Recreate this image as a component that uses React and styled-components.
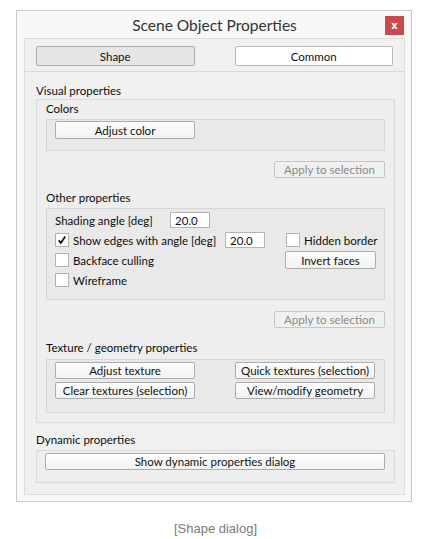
import React from "react";
import styled, { createGlobalStyle } from "styled-components";

const Global = createGlobalStyle`
  html, body { margin: 0; padding: 0; background: #ffffff; }
  body { font-family: Lato, "Noto Sans", sans-serif; font-size: 11.5px; color: #0d0d0d; }
  * { box-sizing: border-box; }
`;

const Page = styled.div`
  width: 431px;
  padding-top: 10px;
`;

const Window = styled.div`
  margin-left: 16px;
  width: 396px;
  background: #f8f8f8;
  border: 1px solid #c9c9c9;
  padding: 0 6px 6px 7px;
`;

const TitleBar = styled.div`
  height: 27px;
  position: relative;
  display: flex;
  align-items: center;
  justify-content: center;
`;

const Title = styled.div`
  font-family: Lato, sans-serif;
  font-size: 15.5px;
  color: #333;
  padding-top: 1px;
`;

const Close = styled.div`
  position: absolute;
  right: 1px;
  top: 5px;
  width: 19px;
  height: 19px;
  background: #c9494c;
  color: #fff;
  font-family: "DejaVu Sans", sans-serif;
  font-size: 10px;
  font-weight: bold;
  display: flex;
  align-items: center;
  justify-content: center;
  line-height: 1;
`;

const Panel = styled.div`
  background: #f0f0f0;
  border: 1px solid #dddddd;
  padding-bottom: 11px;
`;

const TabBar = styled.div`
  display: flex;
  gap: 40px;
  padding: 7px 11px 5px;
  border-bottom: 1px solid #d9d9d9;
`;

const Tab = styled.div`
  width: 160px;
  height: 20px;
  border: 1px solid ${(p) => (p.$active ? "#adadad" : "#b9b9b9")};
  border-radius: 2px;
  background: ${(p) => (p.$active ? "#e6e6e6" : "#ffffff")};
  display: flex;
  align-items: center;
  justify-content: center;
  color: #111;
`;

const Body = styled.div`
  padding: 0 9px 0 11px;
`;

const Label = styled.div`
  height: 16px;
  line-height: 16px;
  margin-top: ${(p) => p.$mt || 0}px;
  margin-bottom: ${(p) => (p.$mb === undefined ? 2 : p.$mb)}px;
  white-space: nowrap;
`;

const Group = styled.div`
  border: 1px solid #dadada;
  background: #eeeeee;
  padding: ${(p) => p.$pad || "1px 9px 9px"};
`;

const SubGroup = styled.div`
  border: 1px solid #d6d6d6;
  background: #e9e9e9;
  padding: ${(p) => p.$pad || "1px 8px"};
  height: ${(p) => (p.$h ? `${p.$h}px` : "auto")};
`;

const Button = styled.div`
  width: ${(p) => (p.$w ? `${p.$w}px` : "auto")};
  height: ${(p) => p.$h || 18}px;
  border: 1px solid ${(p) => (p.$disabled ? "#c6c6c6" : "#acacac")};
  border-radius: 2px;
  background: ${(p) =>
    p.$disabled ? "#f0f0f0" : "linear-gradient(#fdfdfd, #f2f2f2)"};
  color: ${(p) => (p.$disabled ? "#8a8a8a" : "#111")};
  display: flex;
  align-items: center;
  justify-content: center;
  white-space: nowrap;
  flex: ${(p) => (p.$w ? "none" : "1")};
`;

const RightRow = styled.div`
  display: flex;
  justify-content: flex-end;
  margin-top: ${(p) => p.$mt || 0}px;
`;

const Grid2 = styled.div`
  display: grid;
  grid-template-columns: 140px 140px;
  column-gap: 40px;
  row-gap: 3px;
`;

const PropRow = styled.div`
  display: flex;
  align-items: center;
  height: 20px;
`;

const Cell = styled.div`
  width: ${(p) => p.$w}px;
  display: flex;
  align-items: center;
  flex: none;
`;

const Text = styled.span`
  white-space: nowrap;
  width: ${(p) => (p.$w ? `${p.$w}px` : "auto")};
  flex: none;
`;

const Input = styled.div`
  width: 40px;
  height: 16px;
  border: 1px solid #b4b4b4;
  background: #fff;
  display: flex;
  align-items: center;
  padding-left: 4px;
`;

const Box = styled.div`
  width: 14px;
  height: 14px;
  border: 1px solid #b3b3b3;
  background: #fff;
  margin-right: 4px;
  flex: none;
  display: flex;
  align-items: center;
  justify-content: center;
`;

function Check({ checked, children, w }) {
  return (
    <>
      <Box>
        {checked && (
          <svg width="10" height="10" viewBox="0 0 10 10">
            <path d="M1.8 5.4 L3.8 8 L8.2 1.4" fill="none" stroke="#111" strokeWidth="1.8" />
          </svg>
        )}
      </Box>
      <Text $w={w}>{children}</Text>
    </>
  );
}

const Caption = styled.div`
  margin-top: 19px;
  text-align: center;
  font-family: "Liberation Sans", Arial, sans-serif;
  font-size: 13px;
  color: #7a7a7a;
`;

export default function App() {
  return (
    <Page>
      <Global />
      <Window>
        <TitleBar>
          <Title>Scene Object Properties</Title>
          <Close>x</Close>
        </TitleBar>
        <Panel>
          <TabBar>
            <Tab $active>Shape</Tab>
            <Tab>Common</Tab>
          </TabBar>
          <Body>
            <Label $mt={11} $mb={0}>Visual properties</Label>
            <Group>
              <Label>Colors</Label>
              <SubGroup $pad="1px 8px" $h={32}>
                <Button $w={140}>Adjust color</Button>
              </SubGroup>
              <RightRow $mt={10}>
                <Button $w={111} $h={17} $disabled>Apply to selection</Button>
              </RightRow>
              <Label $mt={12}>Other properties</Label>
              <SubGroup $pad="1px 8px 9px">
                <PropRow>
                  <Cell $w={230}>
                    <Text $w={115}>Shading angle [deg]</Text>
                    <Input>20.0</Input>
                  </Cell>
                </PropRow>
                <PropRow>
                  <Cell $w={231}>
                    <Check checked w={152}>Show edges with angle [deg]</Check>
                    <Input>20.0</Input>
                  </Cell>
                  <Cell $w={100}>
                    <Check>Hidden border</Check>
                  </Cell>
                </PropRow>
                <PropRow>
                  <Cell $w={230}>
                    <Check>Backface culling</Check>
                  </Cell>
                  <Button $w={91}>Invert faces</Button>
                </PropRow>
                <PropRow>
                  <Cell $w={230}>
                    <Check>Wireframe</Check>
                  </Cell>
                </PropRow>
              </SubGroup>
              <RightRow $mt={11}>
                <Button $w={111} $h={17} $disabled>Apply to selection</Button>
              </RightRow>
              <Label $mt={12} $mb={3}>Texture / geometry properties</Label>
              <SubGroup $pad="2px 8px 13px">
                <Grid2>
                  <Button $h={17}>Adjust texture</Button>
                  <Button $h={17}>Quick textures (selection)</Button>
                  <Button $h={17}>Clear textures (selection)</Button>
                  <Button $h={17}>View/modify geometry</Button>
                </Grid2>
              </SubGroup>
            </Group>
            <Label $mt={9}>Dynamic properties</Label>
            <Group $pad="2px 9px 12px 8px">
              <Button $h={17}>Show dynamic properties dialog</Button>
            </Group>
          </Body>
        </Panel>
      </Window>
      <Caption>[Shape dialog]</Caption>
    </Page>
  );
}
